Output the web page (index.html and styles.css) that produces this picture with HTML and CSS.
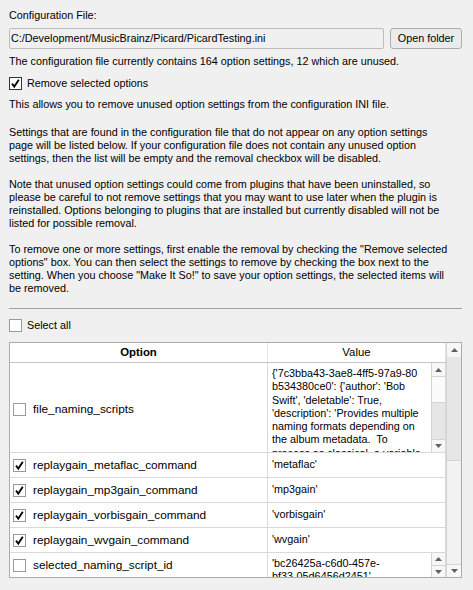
FILE: index.html
```html
<!DOCTYPE html>
<html>
<head>
<meta charset="utf-8">
<link rel="stylesheet" href="styles.css">
</head>
<body>
<div class="page">
  <div class="label">Configuration File:</div>
  <div class="file-row">
    <div class="path">C:/Development/MusicBrainz/Picard/PicardTesting.ini</div>
    <div class="btn">Open folder</div>
  </div>
  <div class="info">The configuration file currently contains 164 option settings, 12 which are unused.</div>
  <div class="check-row remove">
    <span class="cb dark"><svg class="tick" width="11" height="11" viewBox="0 0 11 11"><path d="M2 5.6 L4.3 8.6 L8.8 1.8" fill="none" stroke="#000" stroke-width="1.8"/></svg></span>
    <span>Remove selected options</span>
  </div>
  <div class="desc">This allows you to remove unused option settings from the configuration INI file.</div>
  <div class="paras">
    <p>Settings that are found in the configuration file that do not appear on any option settings<br>page will be listed below. If your configuration file does not contain any unused option<br>settings, then the list will be empty and the removal checkbox will be disabled.</p>
    <p>Note that unused option settings could come from plugins that have been uninstalled, so<br>please be careful to not remove settings that you may want to use later when the plugin is<br>reinstalled. Options belonging to plugins that are installed but currently disabled will not be<br>listed for possible removal.</p>
    <p>To remove one or more settings, first enable the removal by checking the "Remove selected<br>options" box. You can then select the settings to remove by checking the box next to the<br>setting. When you choose "Make It So!" to save your option settings, the selected items will<br>be removed.</p>
  </div>
  <div class="sep"></div>
  <div class="check-row select-all">
    <span class="cb"></span>
    <span>Select all</span>
  </div>
  <div class="table">
    <div class="grid">
      <div class="head">
        <div class="h-opt">Option</div>
        <div class="h-val">Value</div>
      </div>
      <div class="row tall">
        <div class="c-opt"><span class="cb"></span><span>file_naming_scripts</span></div>
        <div class="c-val">
          <div class="val-text multi">{'7c3bba43-3ae8-4ff5-97a9-80<br>b534380ce0': {'author': 'Bob<br>Swift', 'deletable': True,<br>'description': 'Provides multiple<br>naming formats depending on<br>the album metadata.&nbsp; To<br>process as classical, a variable</div>
          <div class="mini-scroll">
            <div class="arrow"><svg width="7" height="4" viewBox="0 0 7 4"><path d="M0 4 L3.5 0 L7 4Z" fill="#606060"/></svg></div>
            <div class="mini-thumb"></div>
            <div class="mini-track"></div>
            <div class="arrow bottom"><svg width="7" height="4" viewBox="0 0 7 4"><path d="M0 0 L3.5 4 L7 0Z" fill="#606060"/></svg></div>
          </div>
        </div>
      </div>
      <div class="row">
        <div class="c-opt"><span class="cb"><svg class="tick" width="11" height="11" viewBox="0 0 11 11"><path d="M2 5.6 L4.3 8.6 L8.8 1.8" fill="none" stroke="#000" stroke-width="1.8"/></svg></span><span>replaygain_metaflac_command</span></div>
        <div class="c-val"><div class="val-text">'metaflac'</div></div>
      </div>
      <div class="row">
        <div class="c-opt"><span class="cb"><svg class="tick" width="11" height="11" viewBox="0 0 11 11"><path d="M2 5.6 L4.3 8.6 L8.8 1.8" fill="none" stroke="#000" stroke-width="1.8"/></svg></span><span>replaygain_mp3gain_command</span></div>
        <div class="c-val"><div class="val-text">'mp3gain'</div></div>
      </div>
      <div class="row">
        <div class="c-opt"><span class="cb"><svg class="tick" width="11" height="11" viewBox="0 0 11 11"><path d="M2 5.6 L4.3 8.6 L8.8 1.8" fill="none" stroke="#000" stroke-width="1.8"/></svg></span><span>replaygain_vorbisgain_command</span></div>
        <div class="c-val"><div class="val-text">'vorbisgain'</div></div>
      </div>
      <div class="row">
        <div class="c-opt"><span class="cb"><svg class="tick" width="11" height="11" viewBox="0 0 11 11"><path d="M2 5.6 L4.3 8.6 L8.8 1.8" fill="none" stroke="#000" stroke-width="1.8"/></svg></span><span>replaygain_wvgain_command</span></div>
        <div class="c-val"><div class="val-text">'wvgain'</div></div>
      </div>
      <div class="row last">
        <div class="c-opt"><span class="cb"></span><span>selected_naming_script_id</span></div>
        <div class="c-val">
          <div class="val-text multi">'bc26425a-c6d0-457e-<br>bf33-05d6456d2451'</div>
          <div class="mini-scroll">
            <div class="arrow small"><svg width="7" height="4" viewBox="0 0 7 4"><path d="M0 4 L3.5 0 L7 4Z" fill="#606060"/></svg></div>
            <div class="arrow small bottom"><svg width="7" height="4" viewBox="0 0 7 4"><path d="M0 0 L3.5 4 L7 0Z" fill="#606060"/></svg></div>
          </div>
        </div>
      </div>
    </div>
    <div class="vscroll">
      <div class="arrow up"><svg width="7" height="4" viewBox="0 0 7 4"><path d="M0 4 L3.5 0 L7 4Z" fill="#606060"/></svg></div>
      <div class="track"></div>
      <div class="thumb"></div>
      <div class="arrow bottom"><svg width="7" height="4" viewBox="0 0 7 4"><path d="M0 0 L3.5 4 L7 0Z" fill="#606060"/></svg></div>
    </div>
  </div>
</div>
</body>
</html>
```

FILE: styles.css
```css
* { box-sizing: border-box; }
html, body { margin: 0; padding: 0; }
body {
  background: #f0f0f0;
  font-family: "Liberation Sans", Arial, sans-serif;
  font-size: 10.8px;
  line-height: 13px;
  color: #000;
}
.page {
  width: 473px;
  height: 590px;
  padding: 9px 11px 0 9px;
  overflow: hidden;
}
.label { height: 13px; }
.file-row {
  display: flex;
  gap: 6px;
  margin-top: 6px;
  height: 21px;
}
.path {
  flex: 1;
  border: 1px solid #bdbdbd;
  border-radius: 2px;
  background: #f0f0f0;
  padding-left: 1px;
  line-height: 19px;
  white-space: nowrap;
  overflow: hidden;
}
.btn {
  width: 72px;
  border: 1px solid #adadad;
  border-radius: 3px;
  background: #ebebeb;
  line-height: 19px;
  text-align: center;
}
.info { margin-top: 6px; }
.check-row {
  display: flex;
  align-items: center;
  gap: 5px;
  height: 13px;
}
.remove { margin-top: 9px; }
.select-all { margin-top: 10px; }
.cb {
  position: relative;
  flex: none;
  width: 13px;
  height: 13px;
  border: 1px solid #999;
  background: #fff;
}
.cb.dark { border-color: #333; }
.tick { display: block; }
.desc { margin-top: 8px; }
.paras { margin-top: 15px; white-space: nowrap; }
.paras p { margin: 0; }
.paras p + p { margin-top: 13px; }
.sep {
  margin-top: 13px;
  height: 1px;
  background: #a0a0a0;
}
.table {
  display: flex;
  margin-top: 10px;
  height: 236px;
  border: 1px solid #acacac;
  background: #fff;
}
.grid { width: 436px; }
.head {
  display: flex;
  height: 20px;
  border-bottom: 1px solid #c4c4c4;
  font-size: 11.4px;
  line-height: 19px;
}
.h-opt {
  width: 258px;
  border-right: 1px solid #e3e3e3;
  text-align: center;
  font-weight: bold;
}
.h-val {
  width: 178px;
  border-right: 1px solid #e3e3e3;
  text-align: center;
}
.row {
  display: flex;
  height: 25px;
  border-bottom: 1px solid #d9d9d9;
}
.row.tall { height: 90px; }
.row.last { height: 24px; border-bottom: 0; }
.c-opt {
  width: 258px;
  border-right: 1px solid #d9d9d9;
  display: flex;
  align-items: center;
  gap: 7px;
  padding-left: 3px;
  font-size: 11.8px;
  white-space: nowrap;
}
.row.tall .c-opt { padding-top: 4px; }
.c-val {
  width: 178px;
  border-right: 1px solid #d9d9d9;
  display: flex;
  overflow: hidden;
}
.val-text {
  flex: 1;
  padding: 4px 0 0 4px;
  line-height: 14px;
  white-space: nowrap;
  overflow: hidden;
}
.val-text.multi { line-height: 13.3px; padding-top: 4px; }
.mini-scroll {
  width: 14px;
  flex: none;
  display: flex;
  flex-direction: column;
  border-left: 1px solid #d4d4d4;
  background: #f7f7f7;
}
.arrow {
  height: 13px;
  flex: none;
  display: flex;
  align-items: center;
  justify-content: center;
  background: #f7f7f7;
}
.arrow svg { display: block; }
.arrow.small { height: 12px; }
.arrow.bottom { border-top: 1px solid #d4d4d4; }
.mini-thumb {
  height: 27px;
  flex: none;
  background: #fbfbfb;
  border-top: 1px solid #d4d4d4;
  border-bottom: 1px solid #d4d4d4;
}
.mini-track { flex: 1; background: #e6e6e6; }
.vscroll {
  width: 15px;
  flex: none;
  display: flex;
  flex-direction: column;
  border-left: 1px solid #d4d4d4;
  background: #f0f0f0;
}
.vscroll .arrow.up { height: 14px; }
.track { height: 103px; flex: none; background: #e6e6e6; }
.thumb {
  flex: 1;
  background: #f2f2f2;
  border-top: 1px solid #d4d4d4;
}
```
